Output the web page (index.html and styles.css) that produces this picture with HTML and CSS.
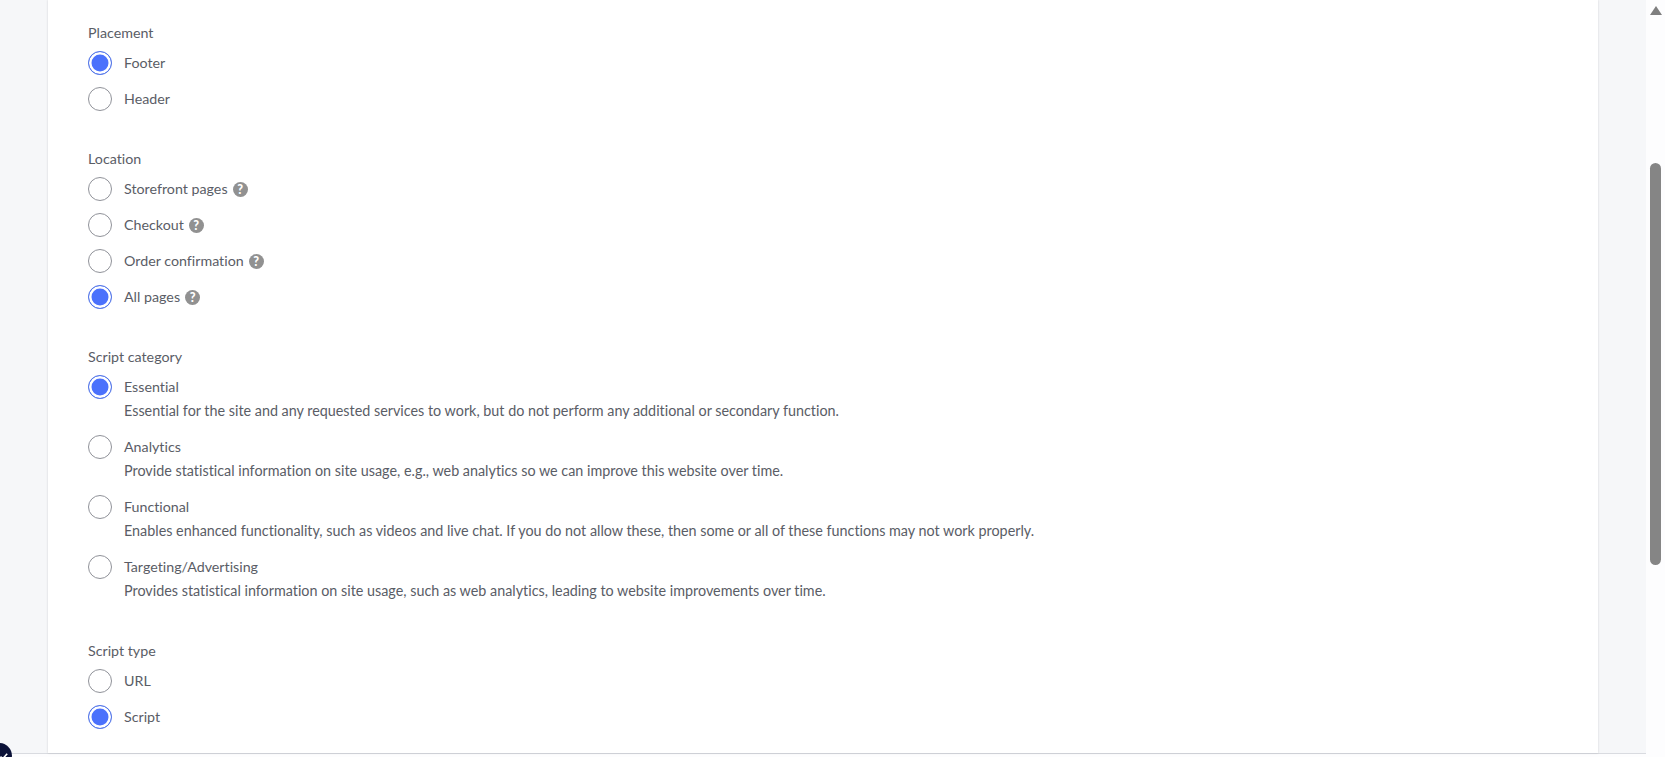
FILE: index.html
```html
<!DOCTYPE html>
<html lang="en">
<head>
<meta charset="UTF-8">
<meta name="viewport" content="width=device-width, initial-scale=1.0">
<title>Script settings</title>
<link rel="stylesheet" href="styles.css">
</head>
<body>
<div class="page">
  <main class="content">
    <form class="card">
      <fieldset class="group">
        <legend class="group-label">Placement</legend>
        <label class="option"><span class="radio checked"></span><span class="option-text">Footer</span></label>
        <label class="option"><span class="radio"></span><span class="option-text">Header</span></label>
      </fieldset>

      <fieldset class="group">
        <legend class="group-label">Location</legend>
        <label class="option"><span class="radio"></span><span class="option-text">Storefront pages</span><span class="help">?</span></label>
        <label class="option"><span class="radio"></span><span class="option-text">Checkout</span><span class="help">?</span></label>
        <label class="option"><span class="radio"></span><span class="option-text">Order confirmation</span><span class="help">?</span></label>
        <label class="option"><span class="radio checked"></span><span class="option-text">All pages</span><span class="help">?</span></label>
      </fieldset>

      <fieldset class="group">
        <legend class="group-label">Script category</legend>
        <div class="option described">
          <span class="radio checked"></span>
          <div>
            <div class="option-text">Essential</div>
            <div class="option-desc">Essential for the site and any requested services to work, but do not perform any additional or secondary function.</div>
          </div>
        </div>
        <div class="option described">
          <span class="radio"></span>
          <div>
            <div class="option-text">Analytics</div>
            <div class="option-desc">Provide statistical information on site usage, e.g., web analytics so we can improve this website over time.</div>
          </div>
        </div>
        <div class="option described">
          <span class="radio"></span>
          <div>
            <div class="option-text">Functional</div>
            <div class="option-desc">Enables enhanced functionality, such as videos and live chat. If you do not allow these, then some or all of these functions may not work properly.</div>
          </div>
        </div>
        <div class="option described">
          <span class="radio"></span>
          <div>
            <div class="option-text">Targeting/Advertising</div>
            <div class="option-desc">Provides statistical information on site usage, such as web analytics, leading to website improvements over time.</div>
          </div>
        </div>
      </fieldset>

      <fieldset class="group">
        <legend class="group-label">Script type</legend>
        <label class="option"><span class="radio"></span><span class="option-text">URL</span></label>
        <label class="option"><span class="radio checked"></span><span class="option-text">Script</span></label>
      </fieldset>
    </form>
  </main>
  <div class="scrollbar">
    <div class="scroll-up"></div>
    <div class="scroll-thumb"></div>
  </div>
</div>
<div class="badge">
  <svg width="14" height="14" viewBox="0 0 14 14"><path d="M3.5 7.5l2.2 2.2 4.5-5" fill="none" stroke="#fff" stroke-width="1.6"/></svg>
</div>
</body>
</html>
```

FILE: styles.css
```css
* {
  box-sizing: border-box;
}
html, body {
  margin: 0;
  height: 100%;
  overflow: hidden;
}
body {
  font-family: "Lato", "Open Sans", sans-serif;
  font-size: 14.25px;
  font-variant-ligatures: none;
  color: #5a5d66;
  background-color: #fdfdfe;
}
.page {
  display: flex;
  height: 757px;
}
.content {
  width: 1646px;
  height: 754px;
  padding: 0 48px;
  background-color: #f6f7f9;
  border-bottom: 1px solid #d9dbe0;
}
.card {
  width: 1550px;
  height: 100%;
  padding: 23px 40px 0;
  background-color: #fff;
  box-shadow: 0 0 2px rgba(49, 52, 64, 0.2);
}
.group {
  margin: 0 0 32px;
  padding: 0;
  border: 0;
}
.group-label {
  padding: 0;
  height: 20px;
  line-height: 20px;
  margin-bottom: 2px;
}
.option {
  display: flex;
  align-items: center;
  height: 36px;
}
.option.described {
  align-items: flex-start;
  height: 60px;
  padding-top: 6px;
}
.radio {
  flex: none;
  width: 24px;
  height: 24px;
  margin-right: 12px;
  border: 1px solid #909299;
  border-radius: 50%;
  background-color: #fff;
}
.radio.checked {
  border-color: #5577e6;
  background-color: #4b71fc;
  box-shadow: inset 0 0 0 2.5px #fff;
}
.option-text, .option-desc {
  line-height: 24px;
}
.option-desc {
  font-size: 14.35px;
}
.help {
  width: 15px;
  height: 15px;
  margin: 1px 0 0 5px;
  border-radius: 50%;
  background-color: #919191;
  color: #fff;
  font-size: 12.5px;
  font-weight: 900;
  line-height: 15px;
  text-align: center;
}
.scrollbar {
  flex: none;
  width: 19px;
  padding: 6px 3px 0;
}
.scroll-up {
  width: 0;
  margin: 0 auto;
  border-left: 6.5px solid transparent;
  border-right: 6.5px solid transparent;
  border-bottom: 9px solid #7f7f7f;
}
.scroll-thumb {
  width: 11px;
  height: 402px;
  margin: 148px 0 0 1px;
  border-radius: 6px;
  background-color: #858585;
}
.badge {
  position: absolute;
  left: -14px;
  top: 743px;
  display: flex;
  align-items: center;
  justify-content: flex-end;
  width: 26px;
  height: 26px;
  padding-right: 1px;
  border-radius: 50%;
  background-color: #0b1238;
}
```
